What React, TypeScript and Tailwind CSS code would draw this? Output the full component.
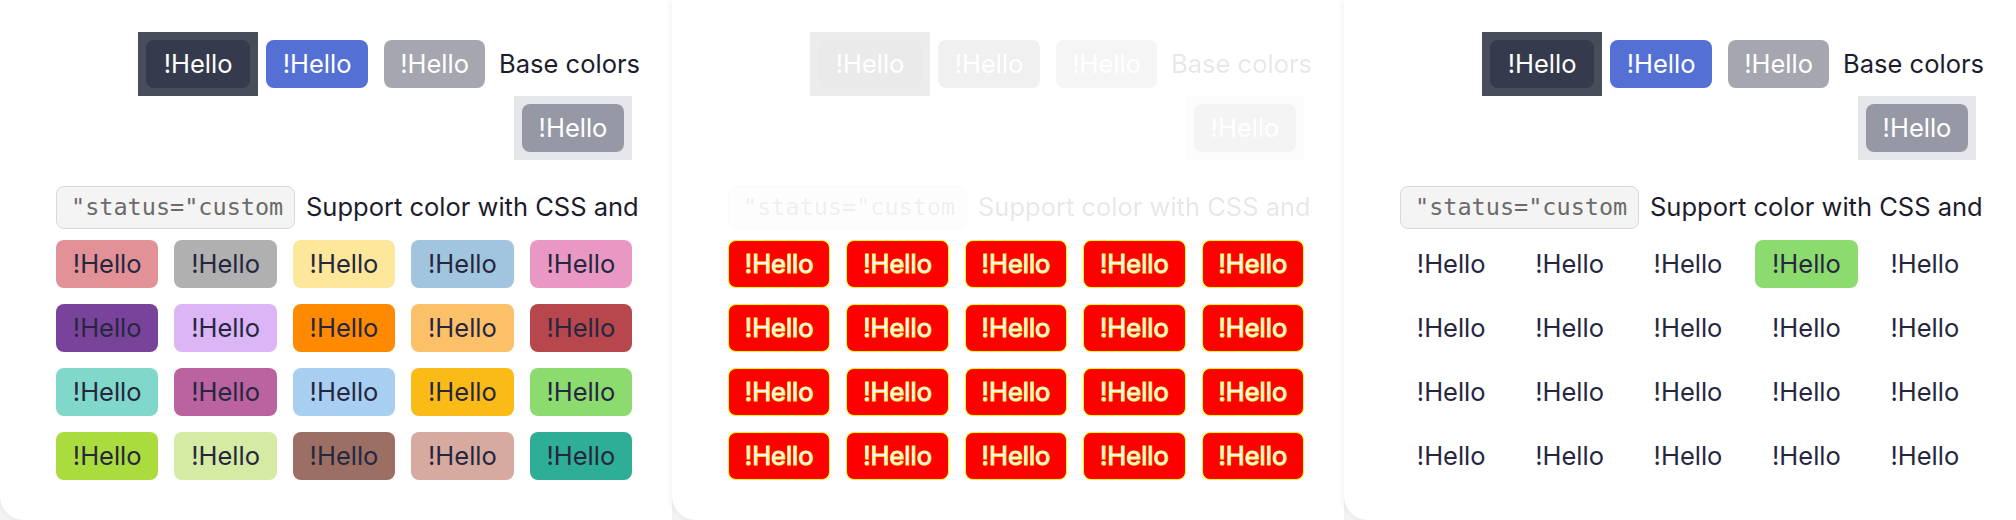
import React from 'react'

type Variant = 'filled' | 'forced' | 'ghost'

const swatches = [
  ['bg-[#e29296]', 'bg-[#b0b0b0]', 'bg-[#fde79a]', 'bg-[#a1c5df]', 'bg-[#e998c3]'],
  ['bg-[#7a439b]', 'bg-[#dbb5f6]', 'bg-[#ff8a00]', 'bg-[#fcc069]', 'bg-[#b8474d]'],
  ['bg-[#80d8ca]', 'bg-[#bb62a0]', 'bg-[#a8cff2]', 'bg-[#fbbb17]', 'bg-[#8cdb6f]'],
  ['bg-[#abdc3d]', 'bg-[#d5eaa3]', 'bg-[#9c6f64]', 'bg-[#d6aa9f]', 'bg-[#2eae96]'],
]

function Header({ faded }: { faded?: boolean }) {
  return (
    <div className={faded ? 'opacity-10 grayscale' : ''}>
      <div className="flex flex-col items-end">
        <div className="flex items-center">
          <div className="bg-[#474d5a] px-2 py-2">
            <button className="flex h-12 w-[104px] items-center justify-center rounded-lg bg-[#353a4d] text-[25.5px] text-white">
              !Hello
            </button>
          </div>
          <div className="px-2 py-2">
            <button className="flex h-12 w-[102px] items-center justify-center rounded-lg bg-[#5470d5] text-[25.5px] text-white">
              !Hello
            </button>
          </div>
          <div className="px-2 py-2">
            <button className="flex h-12 w-[101px] items-center justify-center rounded-lg bg-[#a6a6b1] text-[25.5px] text-white">
              !Hello
            </button>
          </div>
          <span className="ml-1.5 text-[25.5px] text-[#1c1c2c]">Base colors</span>
        </div>
        <div className="mr-2 bg-[#e5e6e9] px-2 py-2">
          <button className="flex h-12 w-[102px] items-center justify-center rounded-lg bg-[#9698a5] text-[25.5px] text-white">
            !Hello
          </button>
        </div>
      </div>

      <div className="mt-[26px] flex items-center gap-[11px]">
        <code className="flex h-[43px] w-[239px] items-center overflow-hidden rounded-lg border-[1.5px] border-[#d8d8d8] bg-[#f4f4f4] px-3.5 font-['DejaVu_Sans_Mono',monospace] text-[23.5px] whitespace-nowrap text-[#6b6b6b]">
          "status="custom
        </code>
        <span className="text-[25.5px] whitespace-nowrap text-[#1c1c2c]">Support color with CSS and</span>
      </div>
    </div>
  )
}

function Grid({ variant }: { variant: Variant }) {
  return (
    <div className="mt-[11px] grid w-[576px] grid-cols-5 gap-4">
      {swatches.flat().map((bg, i) => {
        let cls = 'flex h-12 items-center justify-center rounded-lg text-[25.5px] '
        if (variant === 'filled') cls += `${bg} text-[#26273f]`
        else if (variant === 'forced')
          cls +=
            'border border-[#ffff00] bg-[#ff0000] text-[#f4f4f4] [-webkit-text-stroke:1.2px_#ffff00] [paint-order:stroke_fill]'
        else cls += i === 3 ? 'bg-[#8cdb6f] text-[#26273f]' : 'text-[#26273f]'
        return (
          <button key={i} className={cls}>
            !Hello
          </button>
        )
      })}
    </div>
  )
}

function Panel({ variant }: { variant: Variant }) {
  return (
    <div className="h-[520px] w-[672px] shrink-0 rounded-bl-[24px] bg-white pt-8 pl-14 shadow-[-2px_0_6px_rgba(0,0,0,0.05)]">
      <div className="w-[584px]">
        <Header faded={variant === 'forced'} />
        <Grid variant={variant} />
      </div>
    </div>
  )
}

export default function App() {
  return (
    <div className="flex h-[520px] w-[2016px] overflow-hidden bg-[#f3f3f3] font-[Inter,sans-serif]">
      <Panel variant="filled" />
      <Panel variant="forced" />
      <Panel variant="ghost" />
    </div>
  )
}
